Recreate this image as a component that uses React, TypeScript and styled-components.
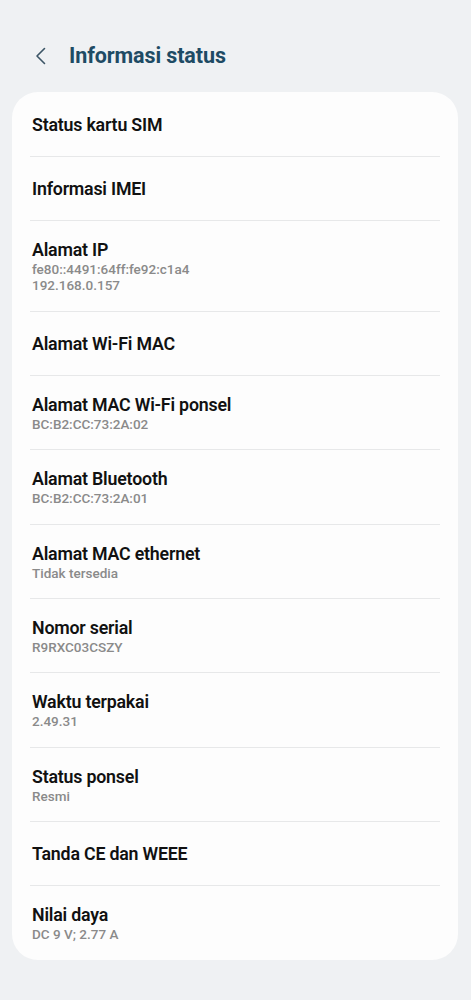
import styled, { createGlobalStyle } from 'styled-components';

type InfoItem = {
    title: string
    values?: string[]
}

const items: InfoItem[] = [
    { title: 'Status kartu SIM' },
    { title: 'Informasi IMEI' },
    { title: 'Alamat IP', values: ['fe80::4491:64ff:fe92:c1a4', '192.168.0.157'] },
    { title: 'Alamat Wi-Fi MAC' },
    { title: 'Alamat MAC Wi-Fi ponsel', values: ['BC:B2:CC:73:2A:02'] },
    { title: 'Alamat Bluetooth', values: ['BC:B2:CC:73:2A:01'] },
    { title: 'Alamat MAC ethernet', values: ['Tidak tersedia'] },
    { title: 'Nomor serial', values: ['R9RXC03CSZY'] },
    { title: 'Waktu terpakai', values: ['2.49.31'] },
    { title: 'Status ponsel', values: ['Resmi'] },
    { title: 'Tanda CE dan WEEE' },
    { title: 'Nilai daya', values: ['DC 9 V; 2.77 A'] },
];

const GlobalStyle = createGlobalStyle`
  html, body {
    margin: 0;
    padding: 0;
    background: #eff1f3;
    font-family: Roboto, "Noto Sans", "Liberation Sans", sans-serif;
  }
`;

const Screen = styled.div`
  min-height: 1000px;
  background: #eff1f3;
  padding-bottom: 40px;
`;

const Header = styled.header`
  display: flex;
  align-items: center;
  height: 40px;
  padding: 36px 0 0 30px;
  margin-bottom: 16px;
`;

const BackButton = styled.button`
  display: flex;
  align-items: center;
  justify-content: center;
  width: 22px;
  height: 30px;
  padding: 0;
  border: none;
  background: transparent;
  margin-right: 17px;
`;

const Title = styled.h1`
  margin: 0;
  font-size: 21.5px;
  line-height: 40px;
  font-weight: 700;
  color: #1e4b64;
  letter-spacing: -0.1px;
`;

const Card = styled.section`
  margin: 0 13px 0 12px;
  background: #fdfdfd;
  border-radius: 26px;
  padding-top: 1px;
  overflow: hidden;
`;

const Row = styled.div<{ $withValue: boolean; $last: boolean }>`
  margin: 0 18px;
  padding: ${(p) => (p.$withValue ? '18px 0 17px 2px' : '21px 0 20px 2px')};
  border-bottom: ${(p) => (p.$last ? 'none' : '1px solid #e7e8e9')};
`;

const RowTitle = styled.div`
  font-size: 17.8px;
  line-height: 22px;
  font-weight: 600;
  color: #111111;
  letter-spacing: -0.2px;
`;

const RowValue = styled.div`
  font-size: 13.5px;
  line-height: 16.4px;
  font-weight: 500;
  color: #8a8a8a;
`;

function BackIcon() {
    return (
        <svg width="14" height="18" viewBox="0 0 14 18" fill="none">
            <path d="M10.5 1.5 L3 9 L10.5 16.5" stroke="#3c5566" strokeWidth="1.6" strokeLinecap="round" strokeLinejoin="round" />
        </svg>
    );
}

export default function App() {
    return (
        <Screen>
            <GlobalStyle />
            <Header>
                <BackButton aria-label="Kembali">
                    <BackIcon />
                </BackButton>
                <Title>Informasi status</Title>
            </Header>

            <Card>
                {items.map((item, index) => (
                    <Row key={item.title} $withValue={!!item.values} $last={index === items.length - 1}>
                        <RowTitle>{item.title}</RowTitle>
                        {item.values && item.values.map((v) => (
                            <RowValue key={v}>{v}</RowValue>
                        ))}
                    </Row>
                ))}
            </Card>
        </Screen>
    );
}
